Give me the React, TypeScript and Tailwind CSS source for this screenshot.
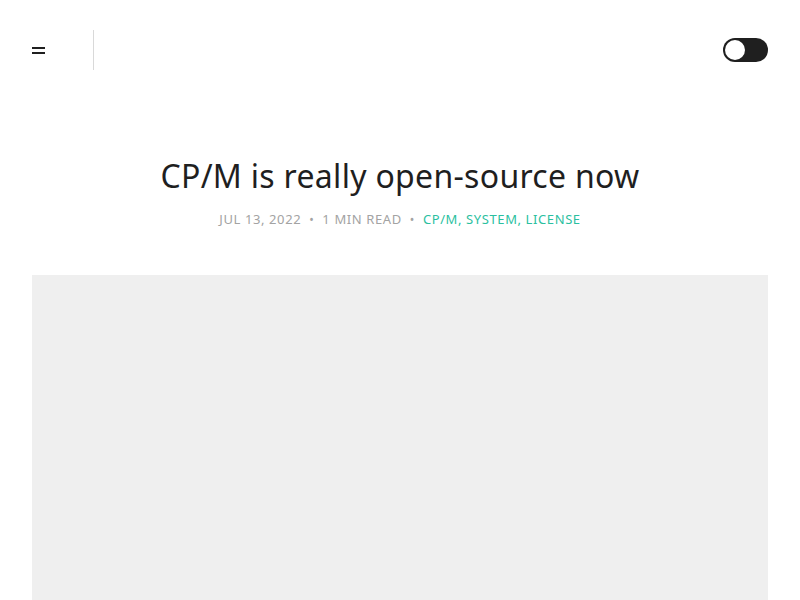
export default function App() {
  return (
    <div className="min-h-screen bg-white" style={{ fontFamily: '"Noto Sans", sans-serif' }}>
      {/* Header */}
      <header className="flex items-center justify-between px-8 h-[100px]">
        <div className="flex items-center h-10">
          <button className="flex flex-col gap-[3px] w-[13px]">
            <span className="block h-[2px] w-full bg-[#1f1f1f]" />
            <span className="block h-[2px] w-full bg-[#1f1f1f]" />
          </button>
          <div className="ml-12 h-10 w-px bg-[#d9d9d9]" />
        </div>
        <div className="relative w-[45px] h-6 rounded-full bg-[#1f1f1f]">
          <div className="absolute left-[2px] top-[2px] w-5 h-5 rounded-full bg-white" />
        </div>
      </header>

      {/* Post */}
      <main className="px-8">
        <h1 className="mt-[56px] text-center text-[32px] leading-[40px] text-[#1f1f1f] font-normal tracking-[0.3px]">
          CP/M is really open-source now
        </h1>
        <div className="mt-[14px] flex items-center justify-center gap-2 text-[13px] tracking-[0.6px] text-[#a3a3a3]">
          <span>JUL 13, 2022</span>
          <span className="text-[12px]">•</span>
          <span>1 MIN READ</span>
          <span className="text-[12px]">•</span>
          <span className="text-[#2bbf9f]">CP/M, SYSTEM, LICENSE</span>
        </div>
        <div className="mt-[45px] h-[325px] bg-[#efefef]" />
      </main>
    </div>
  );
}
